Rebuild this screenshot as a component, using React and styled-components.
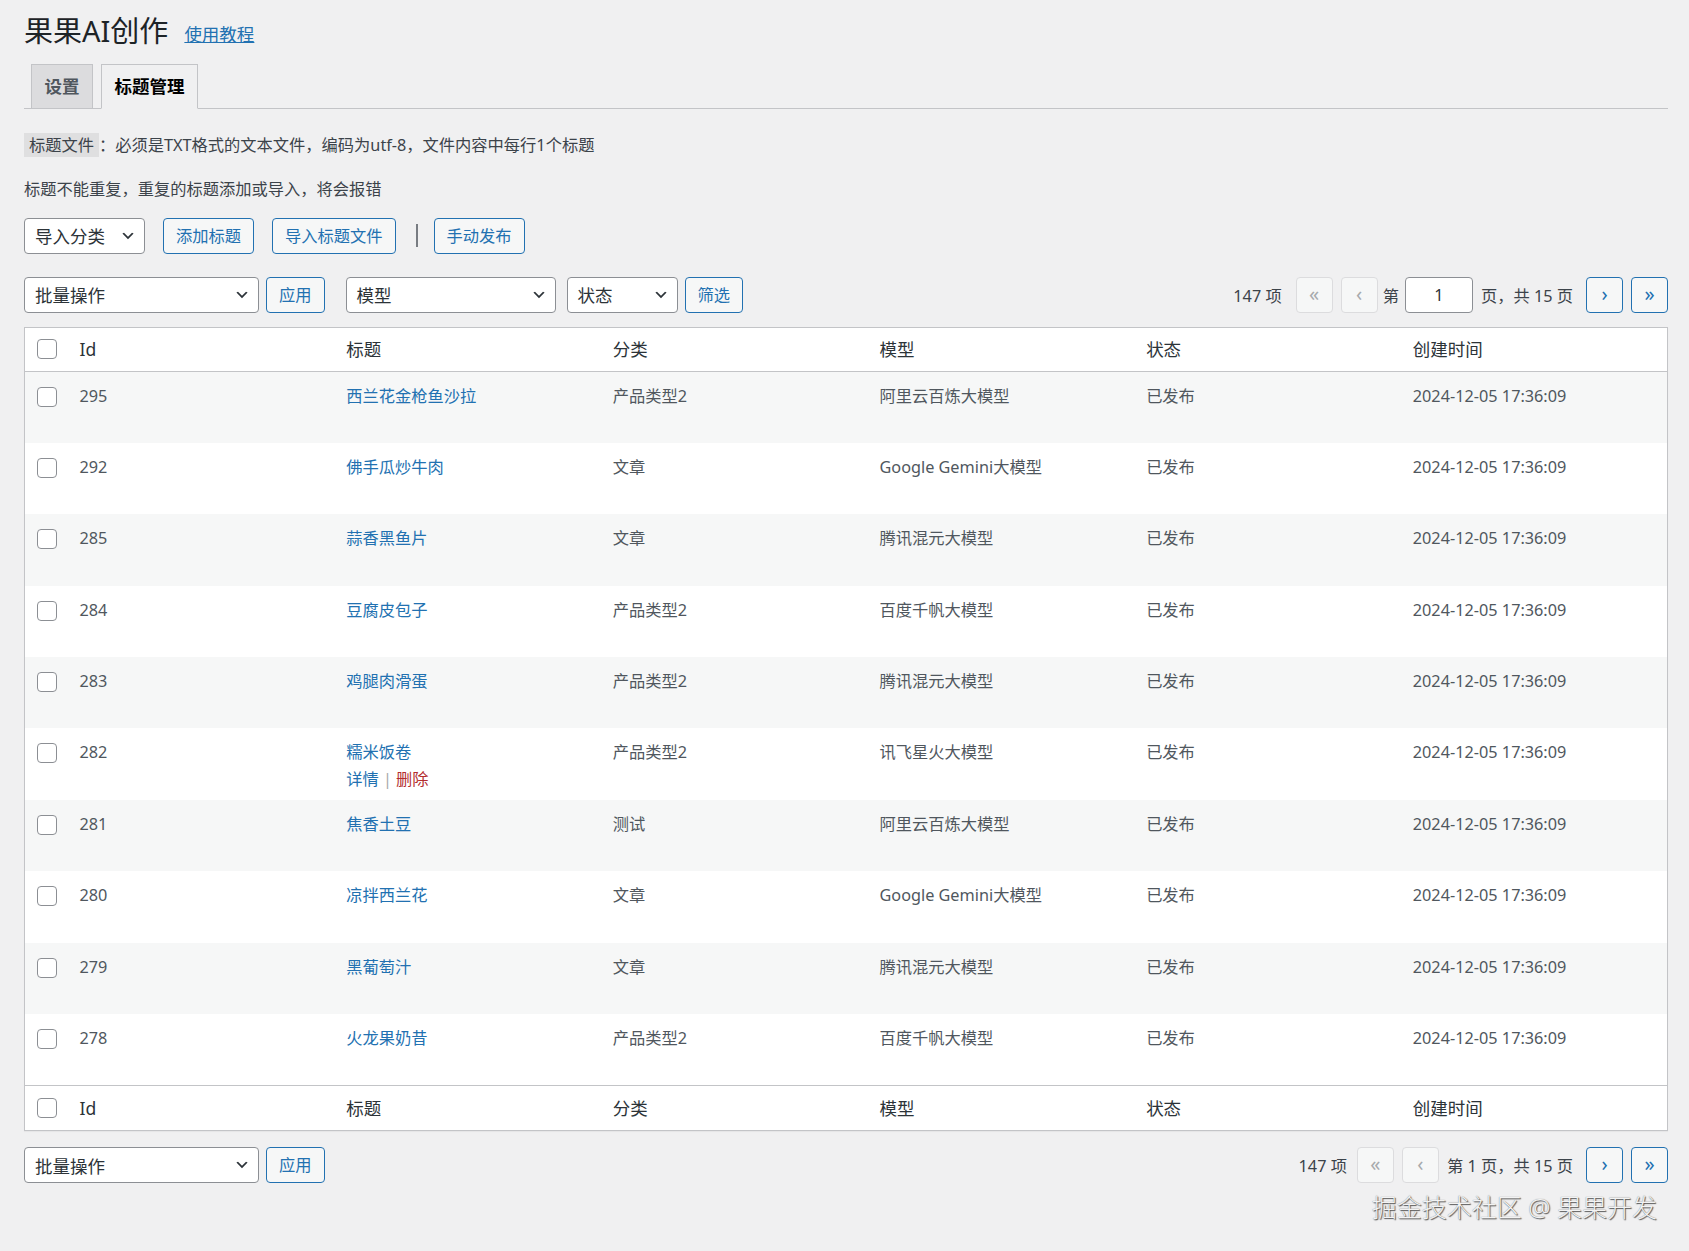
import React from 'react'
import styled, { createGlobalStyle } from 'styled-components'

const GlobalStyle = createGlobalStyle`
  * { box-sizing: border-box; }
  html, body {
    margin: 0;
    padding: 0;
    background: #f0f0f1;
  }
  body {
    font-family: "Noto Sans", "Noto Sans CJK SC", sans-serif;
    font-size: 16.25px;
    color: #3c434a;
  }
`

const Page = styled.div`
  position: relative;
  min-height: 1251px;
  padding: 12px 21px 40px 24px;
`

const Header = styled.div`
  display: flex;
  align-items: center;
  gap: 16px;
  height: 38px;
`
const Title = styled.h1`
  margin: 0;
  font-size: 29px;
  font-weight: 400;
  line-height: 38px;
  color: #1d2327;
`
const HelpLink = styled.a`
  margin-top: 4px;
  font-size: 17.5px;
  color: #2271b1;
  text-decoration: underline;
`

const TabBar = styled.nav`
  display: flex;
  align-items: flex-end;
  gap: 8px;
  margin-top: 14px;
  padding-left: 7px;
  border-bottom: 1px solid #c3c4c7;
`
const Tab = styled.span`
  padding: 6.25px 12.5px;
  font-size: 17.5px;
  font-weight: 700;
  line-height: 30px;
  border: 1px solid #c3c4c7;
  border-bottom: ${p => (p.$active ? '1px solid #f0f0f1' : 'none')};
  margin-bottom: ${p => (p.$active ? '-1px' : '0')};
  background: ${p => (p.$active ? '#f0f0f1' : '#dcdcde')};
  color: ${p => (p.$active ? '#000' : '#50575e')};
`

const Desc = styled.p`
  margin: ${p => p.$mt}px 0 0;
  font-size: 16.25px;
  line-height: 24px;
  color: #3c434a;
`
const Label = styled.span`
  display: inline-block;
  padding: 0 5px;
  background: rgba(0, 0, 0, 0.07);
`

const Toolbar = styled.div`
  display: flex;
  align-items: center;
  gap: ${p => p.$gap}px;
  margin-top: ${p => p.$mt}px;
`
const SelectBox = styled.div`
  display: flex;
  align-items: center;
  justify-content: space-between;
  width: ${p => p.$w}px;
  height: 36px;
  margin-left: ${p => p.$ml || 0}px;
  padding: 0 8px 0 10px;
  background: #fff;
  border: 1px solid #8c8f94;
  border-radius: 4px;
  font-size: 17.5px;
  color: #2c3338;
`
const Button = styled.button`
  height: 36px;
  margin-left: ${p => p.$ml || 0}px;
  padding: 0 12px;
  font-family: inherit;
  font-size: 16.25px;
  line-height: 34px;
  color: #2271b1;
  background: #f6f7f7;
  border: 1px solid #2271b1;
  border-radius: 4px;
`
const Separator = styled.span`
  width: 2px;
  height: 23px;
  margin: 0 -2px 0 2px;
  background: #787c82;
`

const Pager = styled.div`
  display: flex;
  align-items: center;
  gap: 8px;
  margin-left: auto;
  font-size: 16.25px;
  color: #3c434a;
`
const PagerText = styled.span`
  margin: ${p => p.$m || '0'};
  white-space: pre;
`
const PageBtn = styled.span`
  display: inline-flex;
  align-items: center;
  justify-content: center;
  width: 37px;
  height: 36px;
  margin-left: ${p => p.$ml || 0}px;
  padding-bottom: 3px;
  font-size: 20px;
  color: ${p => (p.$disabled ? '#a7aaad' : '#2271b1')};
  background: #f6f7f7;
  border: 1px solid ${p => (p.$disabled ? '#dcdcde' : '#2271b1')};
  border-radius: 4px;
`
const PageInput = styled.span`
  display: inline-flex;
  align-items: center;
  justify-content: center;
  width: 68px;
  height: 36px;
  background: #fff;
  border: 1px solid #8c8f94;
  border-radius: 4px;
  color: #2c3338;
`

const Table = styled.table`
  width: 100%;
  margin-top: 14px;
  table-layout: fixed;
  border-spacing: 0;
  background: #fff;
  border: 1px solid #c3c4c7;
  box-shadow: 0 1px 1px rgba(0, 0, 0, 0.04);
`
const HeadCell = styled.th`
  padding: ${p => (p.$check ? '0 0 0 12px' : '10px 12.5px')};
  width: ${p => (p.$check ? '42px' : 'auto')};
  height: ${p => (p.$foot ? '45px' : '44px')};
  text-align: left;
  font-weight: 400;
  font-size: 17.5px;
  line-height: 23px;
  color: #2c3338;
  border-bottom: ${p => (p.$foot ? 'none' : '1px solid #c3c4c7')};
  border-top: ${p => (p.$foot ? '1px solid #c3c4c7' : 'none')};
`
const Row = styled.tr`
  background: ${p => (p.$odd ? '#f6f7f7' : '#fff')};
`
const Cell = styled.td`
  vertical-align: top;
  padding: ${p => (p.$check ? '15px 0 0 12px' : '12px 12.5px 8.4px')};
  font-size: 16.25px;
  line-height: 24px;
  color: #50575e;
`
const Check = styled.span`
  display: block;
  width: 20px;
  height: 20px;
  background: #fff;
  border: 1px solid #8c8f94;
  border-radius: 4px;
`
const TitleLink = styled.a`
  display: block;
  color: #2271b1;
  text-decoration: none;
`
const Actions = styled.div`
  padding-top: 3px;
  visibility: ${p => (p.$show ? 'visible' : 'hidden')};
  color: #a7aaad;
`
const ActionLink = styled.a`
  color: ${p => (p.$danger ? '#b32d2e' : '#2271b1')};
  text-decoration: none;
`

const Watermark = styled.div`
  position: absolute;
  top: 1188px;
  right: 32px;
  font-size: 25px;
  font-weight: 300;
  color: #f3f3f3;
  text-shadow: 1px 1px 1px #555, 0 0 1px #777;
`

const Chevron = () => (
  <svg width="16" height="16" viewBox="0 0 20 20">
    <path d="M5 6l5 5 5-5 2 1-7 7-7-7 2-1z" fill="#2c3338" />
  </svg>
)

const Select = ({ children, w, ml }) => (
  <SelectBox $w={w} $ml={ml}>
    <span>{children}</span>
    <Chevron />
  </SelectBox>
)

const rows = [
  { id: 295, title: '西兰花金枪鱼沙拉', cat: '产品类型2', model: '阿里云百炼大模型' },
  { id: 292, title: '佛手瓜炒牛肉', cat: '文章', model: 'Google Gemini大模型' },
  { id: 285, title: '蒜香黑鱼片', cat: '文章', model: '腾讯混元大模型' },
  { id: 284, title: '豆腐皮包子', cat: '产品类型2', model: '百度千帆大模型' },
  { id: 283, title: '鸡腿肉滑蛋', cat: '产品类型2', model: '腾讯混元大模型' },
  { id: 282, title: '糯米饭卷', cat: '产品类型2', model: '讯飞星火大模型', hover: true },
  { id: 281, title: '焦香土豆', cat: '测试', model: '阿里云百炼大模型' },
  { id: 280, title: '凉拌西兰花', cat: '文章', model: 'Google Gemini大模型' },
  { id: 279, title: '黑葡萄汁', cat: '文章', model: '腾讯混元大模型' },
  { id: 278, title: '火龙果奶昔', cat: '产品类型2', model: '百度千帆大模型' },
]

const columns = ['Id', '标题', '分类', '模型', '状态', '创建时间']

const HeadRow = ({ foot }) => (
  <tr>
    <HeadCell $check $foot={foot}><Check /></HeadCell>
    {columns.map(c => (
      <HeadCell key={c} $foot={foot}>{c}</HeadCell>
    ))}
  </tr>
)

export default function App() {
  return (
    <Page>
      <GlobalStyle />
      <Header>
        <Title>果果AI创作</Title>
        <HelpLink href="#">使用教程</HelpLink>
      </Header>

      <TabBar>
        <Tab>设置</Tab>
        <Tab $active>标题管理</Tab>
      </TabBar>

      <Desc $mt={24}><Label>标题文件</Label>：必须是TXT格式的文本文件，编码为utf-8，文件内容中每行1个标题</Desc>
      <Desc $mt={20}>标题不能重复，重复的标题添加或导入，将会报错</Desc>

      <Toolbar $gap={18} $mt={17}>
        <Select w={121}>导入分类</Select>
        <Button>添加标题</Button>
        <Button>导入标题文件</Button>
        <Separator />
        <Button>手动发布</Button>
      </Toolbar>

      <Toolbar $gap={7} $mt={23}>
        <Select w={235}>批量操作</Select>
        <Button>应用</Button>
        <Select w={210} ml={14}>模型</Select>
        <Select w={111} ml={4}>状态</Select>
        <Button>筛选</Button>
        <Pager>
          <PagerText $m="0 6px 0 0">147 项</PagerText>
          <PageBtn $disabled>«</PageBtn>
          <PageBtn $disabled>‹</PageBtn>
          <PagerText $m="0 -2px 0 -3px">第</PagerText>
          <PageInput>1</PageInput>
          <PagerText>页，共 15 页</PagerText>
          <PageBtn $ml={5}>›</PageBtn>
          <PageBtn>»</PageBtn>
        </Pager>
      </Toolbar>

      <Table>
        <thead>
          <HeadRow />
        </thead>
        <tbody>
          {rows.map((r, i) => (
            <Row key={r.id} $odd={i % 2 === 0}>
              <Cell $check><Check /></Cell>
              <Cell>{r.id}</Cell>
              <Cell>
                <TitleLink href="#">{r.title}</TitleLink>
                <Actions $show={r.hover}>
                  <ActionLink href="#">详情</ActionLink> | <ActionLink href="#" $danger>删除</ActionLink>
                </Actions>
              </Cell>
              <Cell>{r.cat}</Cell>
              <Cell>{r.model}</Cell>
              <Cell>已发布</Cell>
              <Cell>2024-12-05 17:36:09</Cell>
            </Row>
          ))}
        </tbody>
        <tfoot>
          <HeadRow foot />
        </tfoot>
      </Table>

      <Toolbar $gap={7} $mt={16}>
        <Select w={235}>批量操作</Select>
        <Button>应用</Button>
        <Pager>
          <PagerText $m="0 2px 0 0">147 项</PagerText>
          <PageBtn $disabled>«</PageBtn>
          <PageBtn $disabled>‹</PageBtn>
          <PagerText>第 1 页，共 15 页</PagerText>
          <PageBtn $ml={5}>›</PageBtn>
          <PageBtn>»</PageBtn>
        </Pager>
      </Toolbar>

      <Watermark>掘金技术社区 @ 果果开发</Watermark>
    </Page>
  )
}
